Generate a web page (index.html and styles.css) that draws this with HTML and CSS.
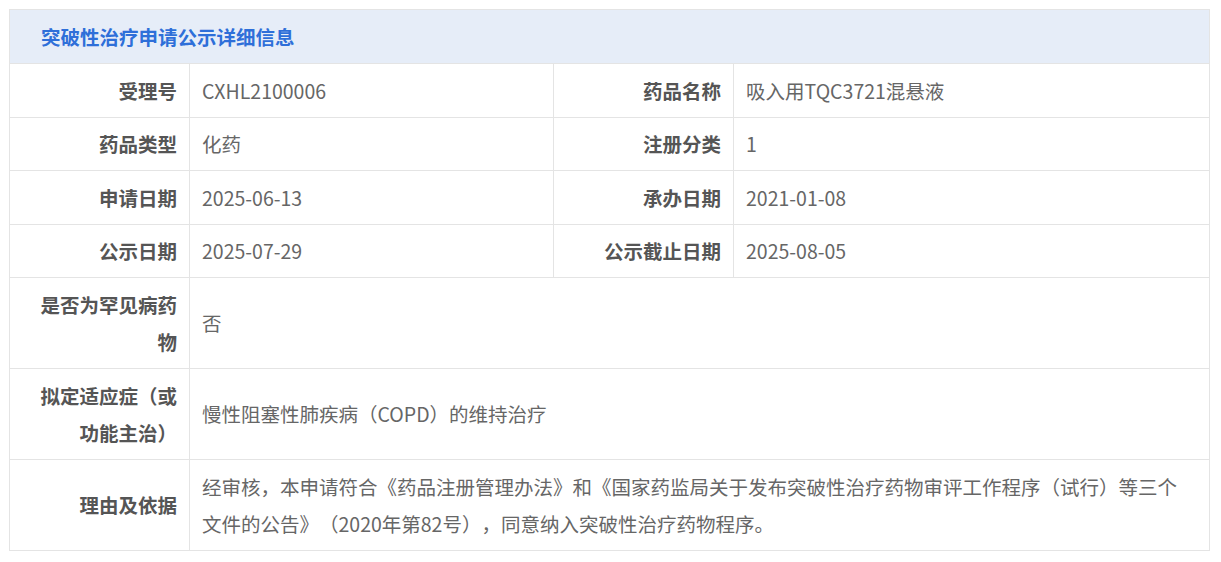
FILE: index.html
```html
<!DOCTYPE html>
<html lang="zh-CN">
<head>
<meta charset="utf-8">
<link rel="stylesheet" href="styles.css">
</head>
<body>
<div class="page">
<table class="info">
  <colgroup>
    <col class="c-label"><col class="c-val1"><col class="c-label"><col class="c-val2">
  </colgroup>
  <thead>
    <tr><th colspan="4" class="title">突破性治疗申请公示详细信息</th></tr>
  </thead>
  <tbody>
    <tr><td class="label">受理号</td><td class="value">CXHL2100006</td><td class="label">药品名称</td><td class="value">吸入用TQC3721混悬液</td></tr>
    <tr><td class="label">药品类型</td><td class="value">化药</td><td class="label">注册分类</td><td class="value">1</td></tr>
    <tr><td class="label">申请日期</td><td class="value">2025-06-13</td><td class="label">承办日期</td><td class="value">2021-01-08</td></tr>
    <tr><td class="label">公示日期</td><td class="value">2025-07-29</td><td class="label">公示截止日期</td><td class="value">2025-08-05</td></tr>
    <tr><td class="label">是否为罕见病药物</td><td class="value" colspan="3">否</td></tr>
    <tr><td class="label">拟定适应症（或功能主治）</td><td class="value" colspan="3">慢性阻塞性肺疾病（COPD）的维持治疗</td></tr>
    <tr><td class="label">理由及依据</td><td class="value" colspan="3">经审核，本申请符合《药品注册管理办法》和《国家药监局关于发布突破性治疗药物审评工作程序（试行）等三个文件的公告》（2020年第82号），同意纳入突破性治疗药物程序。</td></tr>
  </tbody>
</table>
</div>
</body>
</html>
```

FILE: styles.css
```css
html, body {
  margin: 0;
  padding: 0;
  background: #ffffff;
}
.page {
  padding: 9px;
  font-family: "Noto Sans CJK SC", "Noto Sans", sans-serif;
  text-spacing-trim: space-all;
}
.info {
  width: 1200px;
  border-collapse: collapse;
  table-layout: fixed;
  border: 1px solid #e4e4e4;
}
.c-label { width: 180px; }
.c-val1 { width: 364px; }
.c-val2 { width: 476px; }
.info th, .info td {
  border: 1px solid #e4e4e4;
  font-size: 19.5px;
  line-height: 37.5px;
  padding: 7.5px 12px;
  vertical-align: middle;
}
.info .title {
  background: #e6edf8;
  color: #2e6fd9;
  font-weight: bold;
  text-align: left;
  padding: 7.5px 31px 8px;
}
.info .label {
  text-align: right;
  font-weight: bold;
  color: #555555;
}
.info .value {
  text-align: left;
  color: #666666;
  padding-right: 20px;
}
```
